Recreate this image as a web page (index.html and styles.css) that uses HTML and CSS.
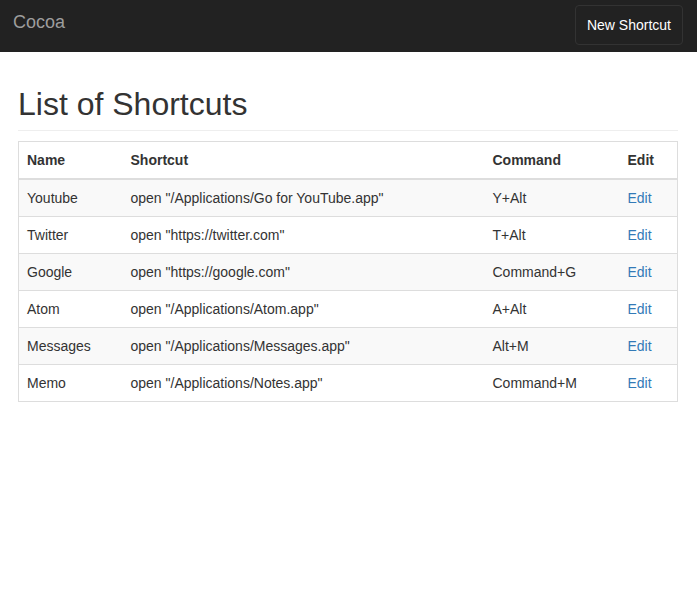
FILE: index.html
```html
<!DOCTYPE html>
<html>
<head>
<meta charset="utf-8">
<title>Cocoa</title>
<link rel="stylesheet" href="styles.css">
</head>
<body>
<nav class="navbar">
  <a class="brand" href="#">Cocoa</a>
  <button class="btn-new" type="button">New Shortcut</button>
</nav>
<main class="container">
  <h1 class="page-header">List of Shortcuts</h1>
  <table class="table">
    <colgroup>
      <col class="c-name"><col class="c-shortcut"><col class="c-command"><col class="c-edit">
    </colgroup>
    <thead>
      <tr><th>Name</th><th>Shortcut</th><th>Command</th><th>Edit</th></tr>
    </thead>
    <tbody>
      <tr><td>Youtube</td><td>open "/Applications/Go for YouTube.app"</td><td>Y+Alt</td><td><a href="#">Edit</a></td></tr>
      <tr><td>Twitter</td><td>open "https://twitter.com"</td><td>T+Alt</td><td><a href="#">Edit</a></td></tr>
      <tr><td>Google</td><td>open "https://google.com"</td><td>Command+G</td><td><a href="#">Edit</a></td></tr>
      <tr><td>Atom</td><td>open "/Applications/Atom.app"</td><td>A+Alt</td><td><a href="#">Edit</a></td></tr>
      <tr><td>Messages</td><td>open "/Applications/Messages.app"</td><td>Alt+M</td><td><a href="#">Edit</a></td></tr>
      <tr><td>Memo</td><td>open "/Applications/Notes.app"</td><td>Command+M</td><td><a href="#">Edit</a></td></tr>
    </tbody>
  </table>
</main>
</body>
</html>
```

FILE: styles.css
```css
* { box-sizing: border-box; }
html, body { margin: 0; padding: 0; }
body {
  font-family: "Liberation Sans", Arial, Helvetica, sans-serif;
  font-size: 14px;
  line-height: 20px;
  color: #333;
  background: #fff;
}
.navbar {
  height: 52px;
  background: #222;
  display: flex;
  align-items: flex-start;
  justify-content: space-between;
  padding: 0 14px 0 13px;
}
.brand {
  font-size: 18px;
  line-height: 20px;
  color: #9d9d9d;
  text-decoration: none;
  padding-top: 12px;
}
.btn-new {
  margin-top: 5px;
  height: 40px;
  padding: 0 11px;
  background: #222;
  border: 1px solid #333;
  border-radius: 4px;
  color: #fff;
  font-family: inherit;
  font-size: 14px;
  line-height: 20px;
  cursor: pointer;
}
.container {
  padding: 0 19px 0 18px;
}
.page-header {
  font-size: 32px;
  font-weight: normal;
  line-height: 35px;
  margin: 35px 0 10px;
  padding-bottom: 8px;
  border-bottom: 1px solid #eee;
  color: #333;
}
.table {
  width: 100%;
  border-collapse: collapse;
  border: 1px solid #ddd;
  table-layout: fixed;
}
.c-name { width: 104px; }
.c-shortcut { width: 362px; }
.c-command { width: 135px; }
.c-edit { width: auto; }
.table th, .table td {
  text-align: left;
  padding: 8px;
  line-height: 20px;
  vertical-align: top;
  white-space: nowrap;
}
.table th {
  font-weight: bold;
  border-bottom: 2px solid #ddd;
}
.table td {
  border-top: 1px solid #ddd;
}
.table tbody tr:first-child td { border-top: 0; }
.table tbody tr:nth-child(odd) { background: #f9f9f9; }
.table a {
  color: #337ab7;
  text-decoration: none;
}
```
